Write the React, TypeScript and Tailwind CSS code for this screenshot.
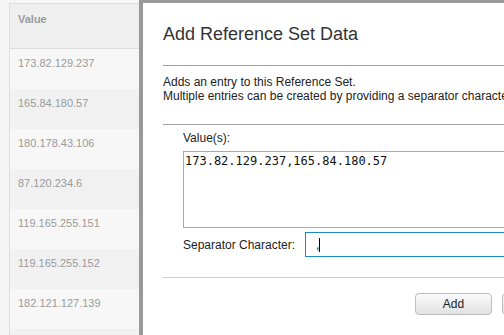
export default function App() {
  const rows = [
    "173.82.129.237",
    "165.84.180.57",
    "180.178.43.106",
    "87.120.234.6",
    "119.165.255.151",
    "119.165.255.152",
    "182.121.127.139",
    "",
  ];
  return (
    <div className="w-[504px] h-[335px] overflow-hidden flex bg-[#f5f5f5] font-['Liberation_Sans',Arial,sans-serif]">
      <div className="w-[9px] shrink-0" />
      <div className="w-[130px] shrink-0 mt-[3px] border-l border-t border-[#dedede] flex flex-col">
        <div className="h-[45px] shrink-0 bg-[#efefef] border-b border-[#dedede] pl-[8px] pt-[9px] text-[11px] leading-[13px] font-bold text-[#9a9a9a]">
          Value
        </div>
        {rows.map((r, i) => (
          <div
            key={i}
            className={`h-[40px] shrink-0 pl-[8px] pt-[8px] text-[11px] leading-[13px] text-[#9a9a9a] ${
              i % 2 === 0 ? "bg-[#f7f7f7]" : "bg-[#f1f1f1]"
            }`}
          >
            {r}
          </div>
        ))}
      </div>
      <div className="w-[500px] shrink-0 border-l-4 border-t-[3px] border-[#999999] bg-white pl-[20px] flex flex-col">
        <div className="h-[63px] shrink-0 pt-[21px] text-[18px] leading-[21px] text-[#333] border-b border-[#a0a0a0]">
          Add Reference Set Data
        </div>
        <div className="h-[59px] shrink-0 pt-[9px] text-[12px] leading-[14px] text-[#222] border-b border-[#a0a0a0] whitespace-nowrap">
          <div>Adds an entry to this Reference Set.</div>
          <div>Multiple entries can be created by providing a separator character.</div>
        </div>
        <div className="shrink-0 pl-[20px] pt-[6px] pb-[20px] border-b border-[#cccccc] flex flex-col">
          <div className="text-[12px] leading-[14px] text-[#222]">Value(s):</div>
          <div className="mt-[6px] h-[77px] border border-[#a9a9a9] px-[1px] pt-[2px] font-['DejaVu_Sans_Mono',monospace] text-[12px] leading-[15px] text-[#111]">
            173.82.129.237,165.84.180.57
          </div>
          <div className="mt-[4px] flex items-center">
            <div className="w-[122px] text-[12px] leading-[14px] text-[#222]">Separator Character:</div>
            <div className="flex-1 h-[25px] border border-[#1a8bc4] pl-[10px] flex items-center text-[12px] text-[#222]">
              <span>,</span>
              <span className="w-px h-[14px] bg-black" />
            </div>
          </div>
        </div>
        <div className="shrink-0 pt-[15px] pl-[252px] flex gap-[10px]">
          <div className="w-[77px] h-[22px] rounded-[4px] border border-[#bdbdbd] bg-gradient-to-b from-[#fbfbfb] to-[#e2e2e2] flex items-center justify-center text-[12px] text-[#222]">
            Add
          </div>
          <div className="w-[77px] h-[22px] rounded-[4px] border border-[#bdbdbd] bg-gradient-to-b from-[#fbfbfb] to-[#e2e2e2] flex items-center justify-center text-[12px] text-[#222]">
            Cancel
          </div>
        </div>
      </div>
    </div>
  );
}
